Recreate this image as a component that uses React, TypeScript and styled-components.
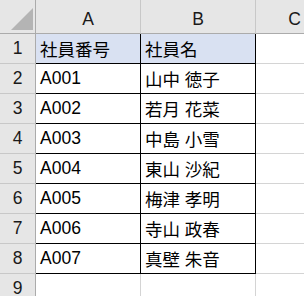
import React from "react";
import styled, { createGlobalStyle, css } from "styled-components";

const Global = createGlobalStyle`
  html, body { margin: 0; padding: 0; background: #ffffff; overflow: hidden; }
  body { font-family: "Liberation Sans", "Noto Sans CJK JP", sans-serif; }
`;

const Viewport = styled.div`
  width: 304px;
  height: 296px;
  overflow: hidden;
`;

const Sheet = styled.div`
  display: grid;
  grid-template-columns: 36px 105px 115px 78px;
  grid-template-rows: 34px repeat(9, 30px);
  width: 334px;
`;

type Kind = "corner" | "colHead" | "rowHead" | "head" | "data" | "empty";

const Cell = styled.div<{ $kind: Kind }>`
  box-sizing: border-box;
  display: flex;
  align-items: center;
  overflow: hidden;
  white-space: nowrap;
  color: #000;
  border-right: 1px solid #d4d4d4;
  border-bottom: 1px solid #d4d4d4;
  ${(p) =>
    p.$kind === "corner" &&
    css`
      background: #e6e6e6;
      border-right-color: #ababab;
      border-bottom-color: #ababab;
      position: relative;
    `}
  ${(p) =>
    p.$kind === "colHead" &&
    css`
      background: #e6e6e6;
      border-right-color: #c8c8c8;
      border-bottom-color: #ababab;
      justify-content: center;
      padding-top: 6px;
      font-size: 17.5px;
      color: #1a1a1a;
    `}
  ${(p) =>
    p.$kind === "rowHead" &&
    css`
      background: #e6e6e6;
      border-right-color: #ababab;
      border-bottom-color: #c8c8c8;
      justify-content: center;
      font-size: 17.5px;
      color: #1a1a1a;
    `}
  ${(p) =>
    (p.$kind === "head" || p.$kind === "data") &&
    css`
      padding-left: 4px;
      font-size: 17.5px;
      border-right-color: #000;
      border-bottom-color: #000;
    `}
  ${(p) =>
    p.$kind === "head" &&
    css`
      background: #d9e1f2;
    `}
`;

const Corner = styled.svg`
  position: absolute;
  left: 11px;
  top: 8px;
  width: 22px;
  height: 22px;
`;

const rows: [string, string][] = [
  ["A001", "山中 徳子"],
  ["A002", "若月 花菜"],
  ["A003", "中島 小雪"],
  ["A004", "東山 沙紀"],
  ["A005", "梅津 孝明"],
  ["A006", "寺山 政春"],
  ["A007", "真壁 朱音"],
];

export default function App() {
  return (
    <>
      <Global />
      <Viewport>
        <Sheet>
          <Cell $kind="corner">
            <Corner viewBox="0 0 22 22">
              <polygon points="0,22 22,0 22,22" fill="#b4b4b4" />
            </Corner>
          </Cell>
          <Cell $kind="colHead">A</Cell>
          <Cell $kind="colHead">B</Cell>
          <Cell $kind="colHead">C</Cell>

          <Cell $kind="rowHead">1</Cell>
          <Cell $kind="head">社員番号</Cell>
          <Cell $kind="head">社員名</Cell>
          <Cell $kind="empty" />

          {rows.map(([id, name], i) => (
            <React.Fragment key={id}>
              <Cell $kind="rowHead">{i + 2}</Cell>
              <Cell $kind="data">{id}</Cell>
              <Cell $kind="data">{name}</Cell>
              <Cell $kind="empty" />
            </React.Fragment>
          ))}

          <Cell $kind="rowHead">9</Cell>
          <Cell $kind="empty" />
          <Cell $kind="empty" />
          <Cell $kind="empty" />
        </Sheet>
      </Viewport>
    </>
  );
}
